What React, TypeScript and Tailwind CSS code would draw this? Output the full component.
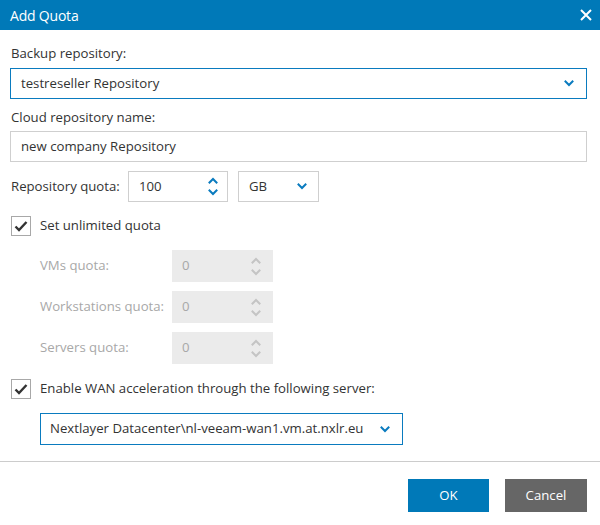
import React from "react";

const Chevron = ({ dir = "down", color = "#0a7bbf", size = 10 }: { dir?: "down" | "up"; color?: string; size?: number }) => (
  <svg width={size} height={size * 0.7} viewBox="0 0 10 7" fill="none">
    <path d={dir === "down" ? "M1.5 1.5 L5 5 L8.5 1.5" : "M1.5 5.5 L5 2 L8.5 5.5"} stroke={color} strokeWidth="2" strokeLinecap="square" />
  </svg>
);

const Check = () => (
  <svg width="14" height="12" viewBox="0 0 14 12" fill="none">
    <path d="M1.5 6.5 L5 10 L12.5 2" stroke="#333" strokeWidth="2.4" />
  </svg>
);

const Checkbox = () => (
  <div className="w-[20px] h-[20px] border border-[#a8a8a8] bg-white flex items-center justify-center">
    <Check />
  </div>
);

const DisabledSpin = () => (
  <div className="w-[101px] h-[32px] bg-[#ebebeb] flex items-center pl-[10px] pr-[12px] justify-between">
    <span className="text-[#a8a8a8]">0</span>
    <div className="flex flex-col gap-[5px] items-center">
      <Chevron dir="up" color="#c4c4c4" size={10} />
      <Chevron dir="down" color="#c4c4c4" size={10} />
    </div>
  </div>
);

export default function App() {
  return (
    <div className="w-[600px] h-[525px] bg-white text-[13.2px] text-[#333] flex flex-col" style={{ fontFamily: '"Open Sans", "Noto Sans", sans-serif' }}>
      <div className="h-[30px] bg-[#0079b8] flex items-center justify-between pl-[10px] pr-[8px] shrink-0">
        <span className="text-white text-[14px] tracking-[-0.2px]">Add Quota</span>
        <svg width="12" height="12" viewBox="0 0 12 12"><path d="M1 1 L11 11 M11 1 L1 11" stroke="white" strokeWidth="2" /></svg>
      </div>
      <div className="px-[10px] pt-[14px] flex flex-col">
        <div className="pl-[1px] leading-[18px]">Backup repository:</div>
        <div className="mt-[6px] h-[31px] border border-[#0a7bbf] flex items-center justify-between pl-[10px] pr-[12px] w-[577px]">
          <span>testreseller Repository</span>
          <Chevron />
        </div>
        <div className="pl-[1px] mt-[9px] leading-[18px]">Cloud repository name:</div>
        <div className="mt-[5px] h-[31px] border border-[#cfcfcf] flex items-center pl-[10px] w-[577px]">
          <span>new company Repository</span>
        </div>
        <div className="mt-[9px] flex items-center h-[31px]">
          <span className="pl-[1px] w-[118px]">Repository quota:</span>
          <div className="w-[100px] h-[31px] border border-[#cfcfcf] flex items-center justify-between pl-[10px] pr-[9px]">
            <span>100</span>
            <div className="flex flex-col gap-[5px]">
              <Chevron dir="up" />
              <Chevron dir="down" />
            </div>
          </div>
          <div className="ml-[10px] w-[81px] h-[31px] border border-[#cfcfcf] flex items-center justify-between pl-[10px] pr-[11px]">
            <span>GB</span>
            <Chevron />
          </div>
        </div>
        <div className="mt-[14px] flex items-center pl-[1px] h-[20px]">
          <Checkbox />
          <span className="ml-[9px]">Set unlimited quota</span>
        </div>
        <div className="mt-[14px] pl-[30px] flex flex-col gap-[9px] text-[#a8a8a8]">
          <div className="flex items-center">
            <span className="w-[132px]">VMs quota:</span>
            <DisabledSpin />
          </div>
          <div className="flex items-center">
            <span className="w-[132px]">Workstations quota:</span>
            <DisabledSpin />
          </div>
          <div className="flex items-center">
            <span className="w-[132px]">Servers quota:</span>
            <DisabledSpin />
          </div>
        </div>
        <div className="mt-[15px] flex items-center pl-[1px] h-[20px]">
          <Checkbox />
          <span className="ml-[9px]">Enable WAN acceleration through the following server:</span>
        </div>
        <div className="mt-[14px] ml-[30px] w-[363px] h-[32px] border border-[#0a7bbf] flex items-center justify-between pl-[9px] pr-[12px]">
          <span>Nextlayer Datacenter\nl-veeam-wan1.vm.at.nxlr.eu</span>
          <Chevron />
        </div>
      </div>
      <div className="mt-[16px] border-t border-[#cccccc]" />
      <div className="flex justify-end gap-[16px] pr-[13px] pt-[17px]">
        <button className="w-[81px] h-[33px] bg-[#0079b8] text-white">OK</button>
        <button className="w-[82px] h-[33px] bg-[#666666] text-white">Cancel</button>
      </div>
    </div>
  );
}
